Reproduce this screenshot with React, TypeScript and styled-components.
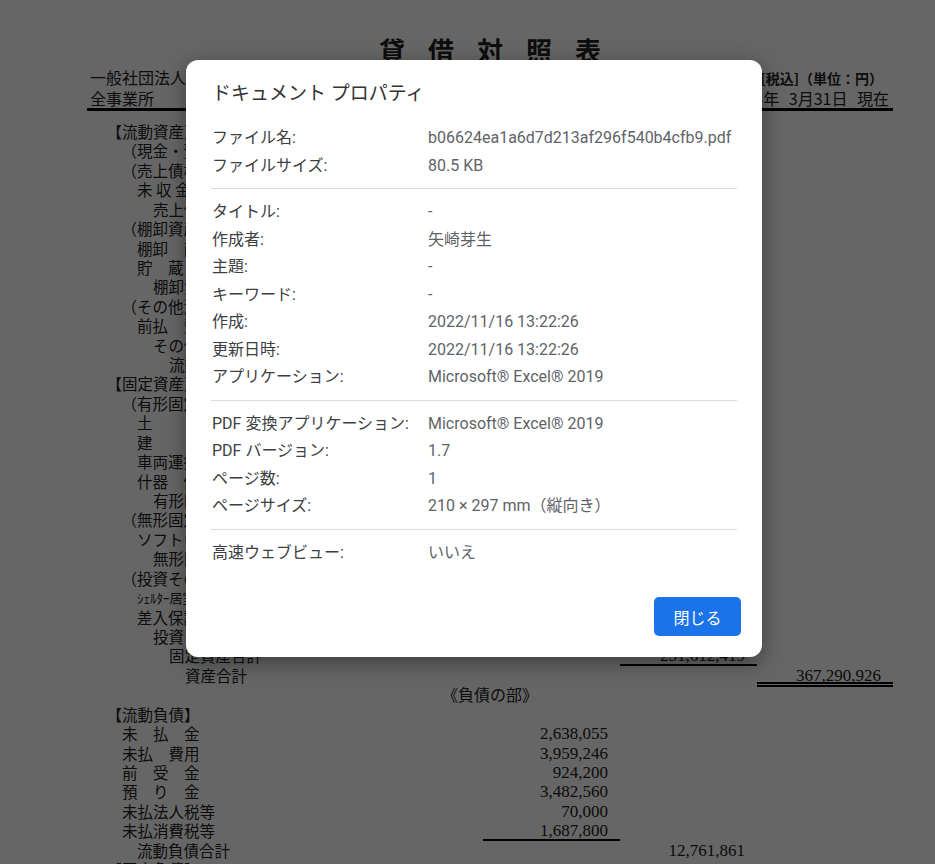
import React from 'react';
import styled, { createGlobalStyle } from 'styled-components';

const GlobalStyle = createGlobalStyle`
    html, body {
        margin: 0;
        padding: 0;
    }
    body {
        width: 935px;
        height: 864px;
        overflow: hidden;
        background: #fff;
    }
`;

const Viewer = styled.div`
    position: relative;
    width: 935px;
    height: 864px;
    overflow: hidden;
    background: #fff;
    color: #222;
`;

const Sheet = styled.div`
    width: 806px;
    margin-left: 87px;
    padding-top: 35px;
    font-family: "Noto Sans CJK JP", sans-serif;
`;

const SheetTitle = styled.h1`
    margin: 0;
    padding-left: 23px;
    text-align: center;
    font-size: 26px;
    font-weight: 700;
    line-height: 30px;
    letter-spacing: 23px;
`;

const MetaRow = styled.div<{ $rule?: boolean }>`
    display: flex;
    justify-content: space-between;
    align-items: baseline;
    padding: 0 ${p => (p.$rule ? 4 : 10)}px 0 3px;
    font-size: 16px;
    line-height: 20px;
    margin-top: ${p => (p.$rule ? 0 : 2)}px;
    border-bottom: ${p => (p.$rule ? '3px solid #000' : 'none')};
`;

const TaxNote = styled.span`
    font-size: 14px;
    font-weight: 700;
`;

const AsOfDate = styled.span`
    word-spacing: 6px;
`;

const Ledger = styled.div`
    margin-top: 11px;
`;

const LedgerRow = styled.div`
    display: grid;
    grid-template-columns: 396px 137px 137px 136px;
    height: 19.43px;
    line-height: 19.43px;
`;

const Label = styled.div<{ $indent: number; $small?: boolean }>`
    padding-left: ${p => p.$indent}px;
    font-size: ${p => (p.$small ? 13 : 15.5)}px;
    white-space: nowrap;
`;

const SectionHeading = styled.div`
    grid-column: 1 / -1;
    text-align: center;
    font-size: 16px;
`;

const Amount = styled.div<{ $rule?: 'single' | 'double' }>`
    position: relative;
    text-align: right;
    padding-right: 12px;
    font-family: "Liberation Serif", serif;
    font-size: 17px;

    &::after {
        content: '';
        display: ${p => (p.$rule ? 'block' : 'none')};
        position: absolute;
        left: 0;
        right: 0;
        bottom: ${p => (p.$rule === 'double' ? -2 : 0)}px;
        height: ${p => (p.$rule === 'double' ? 1 : 0)}px;
        border-top: 2px solid #000;
        border-bottom: ${p => (p.$rule === 'double' ? '2px solid #000' : 'none')};
    }
`;

const Scrim = styled.div`
    position: absolute;
    inset: 0;
    background: rgba(0, 0, 0, 0.6);
    padding: 60px 0 0 186px;
    box-sizing: border-box;
`;

const Dialog = styled.div`
    width: 576px;
    box-sizing: border-box;
    background: #fff;
    border-radius: 12px;
    box-shadow: 0 6px 22px rgba(0, 0, 0, 0.4);
    padding: 20px 25px 21px;
    font-family: Roboto, "Noto Sans CJK JP", sans-serif;
`;

const DialogTitle = styled.h2`
    margin: 0 0 7px;
    padding-left: 1px;
    font-size: 19px;
    font-weight: 400;
    line-height: 28px;
    color: #333;
`;

const Section = styled.div`
    padding: 9px 0;

    & + & {
        border-top: 1px solid #dadce0;
    }
`;

const PropRow = styled.div`
    display: grid;
    grid-template-columns: 216px 1fr;
    font-size: 16px;
    line-height: 27.5px;
    padding-left: 1px;
`;

const PropName = styled.span`
    color: #3c4043;
    white-space: nowrap;
`;

const PropValue = styled.span`
    color: #5f6368;
    white-space: nowrap;
`;

const Footer = styled.div`
    display: flex;
    justify-content: flex-end;
    margin: 22px -4px 0 0;
`;

const CloseButton = styled.button`
    width: 87px;
    height: 39px;
    border: none;
    border-radius: 5px;
    background: #1a73e8;
    color: #fff;
    font-family: Roboto, "Noto Sans CJK JP", sans-serif;
    font-size: 16px;
    cursor: pointer;
`;

type Rule = 'single' | 'double';

interface LedgerLine {
    label: string;
    indent: number;
    col?: 0 | 1 | 2;
    value?: string;
    rule?: Rule;
    small?: boolean;
    heading?: boolean;
}

const lines: LedgerLine[] = [
    { label: '【流動資産】', indent: 19.5 },
    { label: '（現金・預金）', indent: 34.5, col: 1, value: '58,214,330' },
    { label: '（売上債権）', indent: 34.5 },
    { label: '未 収 金', indent: 50, col: 0, value: '6,812,540' },
    { label: '売上債権合計', indent: 66, col: 1, value: '6,812,540' },
    { label: '（棚卸資産）', indent: 34.5 },
    { label: '棚卸　商品', indent: 50, col: 0, value: '412,300' },
    { label: '貯　蔵　品', indent: 50, col: 0, value: '96,500' },
    { label: '棚卸資産合計', indent: 66, col: 1, value: '508,800' },
    { label: '（その他流動資産）', indent: 34.5 },
    { label: '前払　費用', indent: 50, col: 0, value: '1,142,418' },
    { label: 'その他流動資産合計', indent: 66, col: 1, value: '1,142,418' },
    { label: '流動資産合計', indent: 82, col: 1, value: '66,678,088' },
    { label: '【固定資産】', indent: 19.5 },
    { label: '（有形固定資産）', indent: 34.5 },
    { label: '土　　　地', indent: 50, col: 0, value: '120,000,000' },
    { label: '建　　　物', indent: 50, col: 0, value: '98,412,560' },
    { label: '車両運搬具', indent: 50, col: 0, value: '2,315,000' },
    { label: '什器　備品', indent: 50, col: 0, value: '1,204,859' },
    { label: '有形固定資産合計', indent: 66, col: 1, value: '221,932,419' },
    { label: '（無形固定資産）', indent: 34.5 },
    { label: 'ソフトウェア', indent: 50, col: 0, value: '880,000' },
    { label: '無形固定資産合計', indent: 66, col: 1, value: '880,000' },
    { label: '（投資その他の資産）', indent: 34.5 },
    { label: 'ｼｪﾙﾀｰ居室保証金', indent: 50, col: 0, value: '18,300,000', small: true },
    { label: '差入保証金', indent: 50, col: 0, value: '10,500,000' },
    { label: '投資その他の資産合計', indent: 66, col: 1, value: '28,800,000' },
    { label: '固定資産合計', indent: 82, col: 1, value: '251,612,419', rule: 'single' },
    { label: '資産合計', indent: 98, col: 2, value: '367,290,926', rule: 'double' },
    { label: '《負債の部》', indent: 0, heading: true },
    { label: '【流動負債】', indent: 19.5 },
    { label: '未　払　金', indent: 35, col: 0, value: '2,638,055' },
    { label: '未払　費用', indent: 35, col: 0, value: '3,959,246' },
    { label: '前　受　金', indent: 35, col: 0, value: '924,200' },
    { label: '預　り　金', indent: 35, col: 0, value: '3,482,560' },
    { label: '未払法人税等', indent: 35, col: 0, value: '70,000' },
    { label: '未払消費税等', indent: 35, col: 0, value: '1,687,800', rule: 'single' },
    { label: '流動負債合計', indent: 50, col: 1, value: '12,761,861' },
    { label: '【固定負債】', indent: 19.5 },
];

const properties: [string, string][][] = [
    [
        ['ファイル名:', 'b06624ea1a6d7d213af296f540b4cfb9.pdf'],
        ['ファイルサイズ:', '80.5 KB'],
    ],
    [
        ['タイトル:', '-'],
        ['作成者:', '矢崎芽生'],
        ['主題:', '-'],
        ['キーワード:', '-'],
        ['作成:', '2022/11/16 13:22:26'],
        ['更新日時:', '2022/11/16 13:22:26'],
        ['アプリケーション:', 'Microsoft® Excel® 2019'],
    ],
    [
        ['PDF 変換アプリケーション:', 'Microsoft® Excel® 2019'],
        ['PDF バージョン:', '1.7'],
        ['ページ数:', '1'],
        ['ページサイズ:', '210 × 297 mm（縦向き）'],
    ],
    [['高速ウェブビュー:', 'いいえ']],
];

const BalanceSheet: React.FC = () => (
    <Sheet>
        <SheetTitle>貸借対照表</SheetTitle>
        <MetaRow>
            <span>一般社団法人　地域福祉協会</span>
            <TaxNote>[税込]（単位：円）</TaxNote>
        </MetaRow>
        <MetaRow $rule>
            <span>全事業所</span>
            <AsOfDate>令和4年 3月31日 現在</AsOfDate>
        </MetaRow>
        <Ledger>
            {lines.map((line, i) =>
                line.heading ? (
                    <LedgerRow key={i}>
                        <SectionHeading>{line.label}</SectionHeading>
                    </LedgerRow>
                ) : (
                    <LedgerRow key={i}>
                        <Label $indent={line.indent} $small={line.small}>
                            {line.label}
                        </Label>
                        {[0, 1, 2].map(c => (
                            <Amount key={c} $rule={line.col === c ? line.rule : undefined}>
                                {line.col === c ? line.value : ''}
                            </Amount>
                        ))}
                    </LedgerRow>
                )
            )}
        </Ledger>
    </Sheet>
);

const PropertiesDialog: React.FC = () => (
    <Dialog>
        <DialogTitle>ドキュメント プロパティ</DialogTitle>
        {properties.map((group, g) => (
            <Section key={g}>
                {group.map(([name, value]) => (
                    <PropRow key={name}>
                        <PropName>{name}</PropName>
                        <PropValue>{value}</PropValue>
                    </PropRow>
                ))}
            </Section>
        ))}
        <Footer>
            <CloseButton>閉じる</CloseButton>
        </Footer>
    </Dialog>
);

export default function App() {
    return (
        <>
            <GlobalStyle />
            <Viewer>
                <BalanceSheet />
                <Scrim>
                    <PropertiesDialog />
                </Scrim>
            </Viewer>
        </>
    );
}
